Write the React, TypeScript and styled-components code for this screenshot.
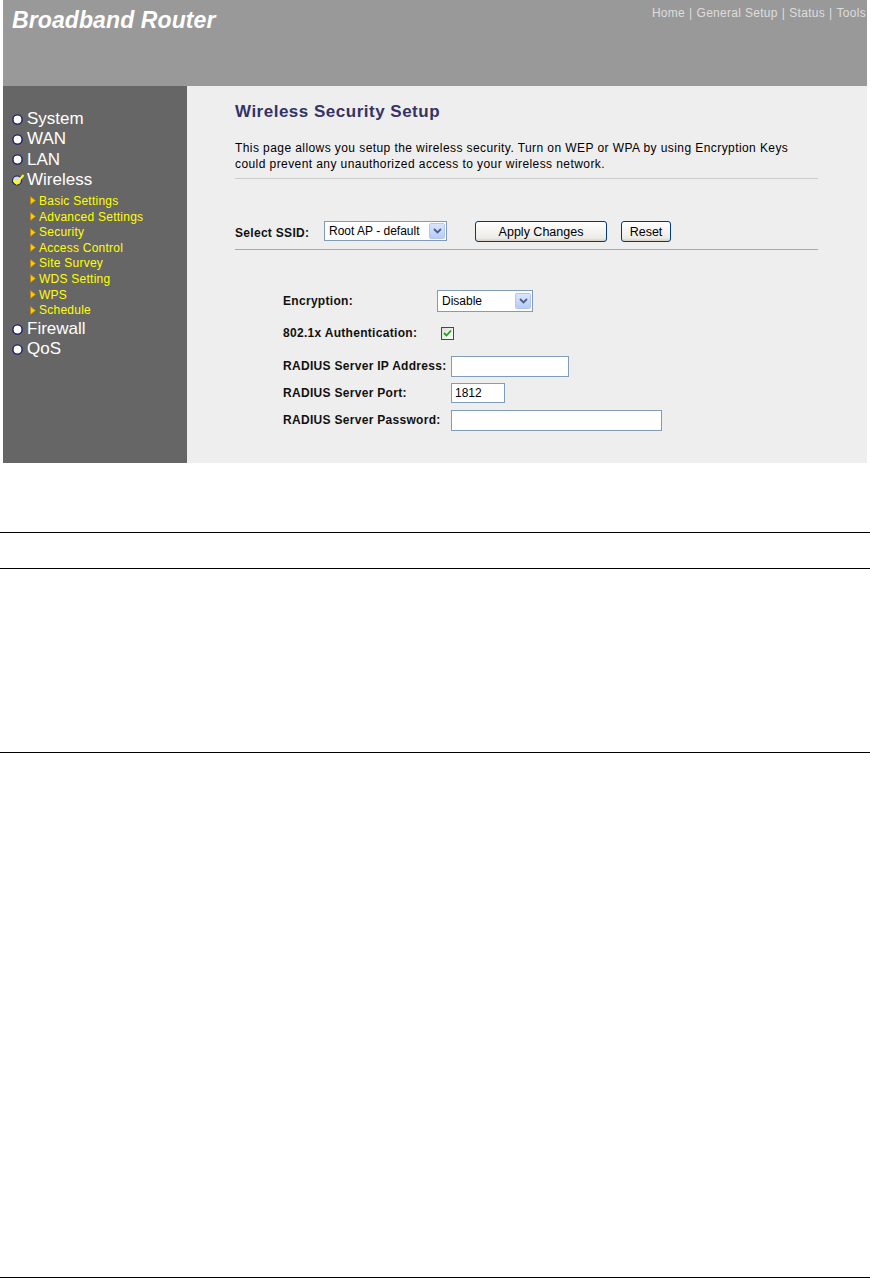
import React from 'react'
import styled, { createGlobalStyle } from 'styled-components'

const GlobalStyle = createGlobalStyle`
  html, body {
    margin: 0;
    padding: 0;
    background: #ffffff;
  }
  body {
    font-family: "Liberation Sans", Arial, sans-serif;
  }
`

const Page = styled.div`
  width: 870px;
  height: 1279px;
  display: flex;
  flex-direction: column;
  position: relative;
`

const Shot = styled.div`
  margin-left: 3px;
  width: 864px;
  display: flex;
  flex-direction: column;
`

const Header = styled.div`
  height: 86px;
  background: #999999;
  display: flex;
  justify-content: space-between;
  align-items: flex-start;
`

const Brand = styled.div`
  font-size: 23px;
  font-weight: bold;
  font-style: italic;
  color: #ffffff;
  padding: 7px 0 0 9px;
  letter-spacing: 0.1px;
`

const TopNav = styled.div`
  font-size: 12px;
  color: #dddddd;
  padding: 6px 1px 0 0;
  display: flex;
  gap: 4px;
  letter-spacing: 0.3px;
`

const Sep = styled.span`
  color: #dddddd;
`

const Body = styled.div`
  display: flex;
  height: 377px;
`

const Sidebar = styled.div`
  width: 184px;
  background: #666666;
  padding-top: 23px;
  display: flex;
  flex-direction: column;
`

const MainItem = styled.div`
  display: flex;
  align-items: center;
  height: 20.3px;
  padding-left: 9px;
  font-size: 17px;
  color: #ffffff;
  gap: 4px;
`

const SubList = styled.div`
  display: flex;
  flex-direction: column;
  padding: 3px 0 1px;
`

const SubItem = styled.div`
  display: flex;
  align-items: center;
  height: 15.6px;
  padding-left: 27px;
  font-size: 12px;
  color: #ffff00;
  gap: 3px;
  letter-spacing: 0.25px;
`

const Content = styled.div`
  flex: 1;
  background: #eeeeee;
  padding: 16px 48px 0 48px;
`

const Title = styled.div`
  font-size: 17px;
  font-weight: bold;
  color: #333366;
  height: 22px;
  letter-spacing: 0.5px;
`

const Intro = styled.div`
  margin-top: 16px;
  font-size: 12px;
  line-height: 16px;
  color: #000000;
  letter-spacing: 0.42px;
  width: 583px;
  padding-bottom: 6px;
  border-bottom: 1px solid #cccccc;
  white-space: nowrap;
`

const SsidRow = styled.div`
  margin-top: 42px;
  width: 583px;
  height: 28px;
  display: flex;
  align-items: flex-start;
  border-bottom: 1px solid #aaaaa0;
`

const BoldLabel = styled.span`
  font-size: 12px;
  font-weight: bold;
  color: #111111;
  letter-spacing: 0.3px;
`

const SsidLabel = styled(BoldLabel)`
  margin-top: 5px;
  width: 89px;
`

const SelectBox = styled.div<{ w: number; h: number }>`
  width: ${p => p.w}px;
  height: ${p => p.h}px;
  box-sizing: border-box;
  border: 1px solid #7f9db9;
  background: #ffffff;
  display: flex;
  align-items: center;
  justify-content: space-between;
  padding: 0 1px 0 4px;
  font-size: 12px;
  color: #000000;
`

const Arrow = styled.div`
  width: 16px;
  height: 16px;
  box-sizing: border-box;
  background: linear-gradient(#dbe6fd, #b7cbf7);
  border: 1px solid #b3c5f0;
  border-radius: 2px;
  display: flex;
  align-items: center;
  justify-content: center;
`

const Button = styled.div<{ w: number; ml: number }>`
  width: ${p => p.w}px;
  margin-left: ${p => p.ml}px;
  height: 21px;
  box-sizing: border-box;
  border: 1px solid #003c74;
  border-radius: 3px;
  background: linear-gradient(#ffffff, #ecebe6 85%, #d6d0c5);
  display: flex;
  align-items: center;
  justify-content: center;
  font-size: 12.5px;
  color: #000000;
`

const Form = styled.div`
  margin: 39px 0 0 48px;
  display: flex;
  flex-direction: column;
`

const FormRow = styled.div<{ h: number }>`
  display: flex;
  align-items: center;
  height: ${p => p.h}px;
`

const FieldLabel = styled(BoldLabel)<{ w: number }>`
  width: ${p => p.w}px;
  flex-shrink: 0;
`

const TextBox = styled.div<{ w: number; h: number }>`
  width: ${p => p.w}px;
  height: ${p => p.h}px;
  box-sizing: border-box;
  border: 1px solid #7f9db9;
  background: #ffffff;
  font-size: 12px;
  display: flex;
  align-items: center;
  padding-left: 3px;
`

const Check = styled.div`
  margin-left: 4px;
  width: 13px;
  height: 13px;
  box-sizing: border-box;
  border: 1px solid #1c5180;
  background: linear-gradient(135deg, #dcdcd7, #ffffff);
  display: flex;
  align-items: center;
  justify-content: center;
`

const Rule = styled.div<{ top: number }>`
  position: absolute;
  left: 0;
  top: ${p => p.top}px;
  width: 870px;
  height: 1px;
  background: #000000;
`

const Bullet = () => (
  <svg width="11" height="11" viewBox="0 0 11 11">
    <circle cx="5.5" cy="5.5" r="4.6" fill="#ffffff" stroke="#1a1a6e" strokeWidth="1.4" />
    <circle cx="4.7" cy="4.7" r="1.8" fill="#ffffff" />
  </svg>
)

const Tick = () => (
  <svg width="11" height="12" viewBox="0 0 11 12" style={{ overflow: 'visible' }}>
    <circle cx="5" cy="6.5" r="4.5" fill="#d8d8e8" stroke="#1a1a6e" strokeWidth="1.2" />
    <path d="M1.5 6 L4.5 9.5 L11.5 1" fill="none" stroke="#ffff00" strokeWidth="2" />
  </svg>
)

const Triangle = () => (
  <svg width="6" height="9" viewBox="0 0 6 9">
    <path d="M0.5 0.5 L5.5 4.5 L0.5 8.5 Z" fill="#ffcc00" stroke="#c08000" strokeWidth="0.6" />
  </svg>
)

const Chevron = () => (
  <svg width="9" height="6" viewBox="0 0 9 6">
    <path d="M1 1 L4.5 4.5 L8 1" fill="none" stroke="#4d6185" strokeWidth="1.8" />
  </svg>
)

const CheckMark = () => (
  <svg width="9" height="8" viewBox="0 0 9 8">
    <path d="M1 4 L3.5 6.5 L8 1.5" fill="none" stroke="#21a121" strokeWidth="1.8" />
  </svg>
)

const mainTop = ['System', 'WAN', 'LAN']
const subs = ['Basic Settings', 'Advanced Settings', 'Security', 'Access Control', 'Site Survey', 'WDS Setting', 'WPS', 'Schedule']
const mainBottom = ['Firewall', 'QoS']

const App: React.FC = () => {
  return (
    <Page>
      <GlobalStyle />
      <Shot>
        <Header>
          <Brand>Broadband Router</Brand>
          <TopNav>
            <span>Home</span><Sep>|</Sep>
            <span>General Setup</span><Sep>|</Sep>
            <span>Status</span><Sep>|</Sep>
            <span>Tools</span>
          </TopNav>
        </Header>
        <Body>
          <Sidebar>
            {mainTop.map(m => (
              <MainItem key={m}><Bullet />{m}</MainItem>
            ))}
            <MainItem><Tick />Wireless</MainItem>
            <SubList>
              {subs.map(s => (
                <SubItem key={s}><Triangle />{s}</SubItem>
              ))}
            </SubList>
            {mainBottom.map(m => (
              <MainItem key={m}><Bullet />{m}</MainItem>
            ))}
          </Sidebar>
          <Content>
            <Title>Wireless Security Setup</Title>
            <Intro>
              This page allows you setup the wireless security. Turn on WEP or WPA by using Encryption Keys
              <br />
              could prevent any unauthorized access to your wireless network.
            </Intro>
            <SsidRow>
              <SsidLabel>Select SSID:</SsidLabel>
              <SelectBox w={123} h={20}>Root AP - default<Arrow><Chevron /></Arrow></SelectBox>
              <Button w={132} ml={28}>Apply Changes</Button>
              <Button w={50} ml={14}>Reset</Button>
            </SsidRow>
            <Form>
              <FormRow h={24}>
                <FieldLabel w={154}>Encryption:</FieldLabel>
                <SelectBox w={96} h={22}>Disable<Arrow><Chevron /></Arrow></SelectBox>
              </FormRow>
              <FormRow h={40}>
                <FieldLabel w={154}>802.1x Authentication:</FieldLabel>
                <Check><CheckMark /></Check>
              </FormRow>
              <FormRow h={26}>
                <FieldLabel w={168}>RADIUS Server IP Address:</FieldLabel>
                <TextBox w={118} h={21} />
              </FormRow>
              <FormRow h={28}>
                <FieldLabel w={168}>RADIUS Server Port:</FieldLabel>
                <TextBox w={54} h={20}>1812</TextBox>
              </FormRow>
              <FormRow h={26}>
                <FieldLabel w={168}>RADIUS Server Password:</FieldLabel>
                <TextBox w={211} h={21} />
              </FormRow>
            </Form>
          </Content>
        </Body>
      </Shot>
      <Rule top={532} />
      <Rule top={568} />
      <Rule top={752} />
      <Rule top={1277} />
    </Page>
  )
}

export default App
